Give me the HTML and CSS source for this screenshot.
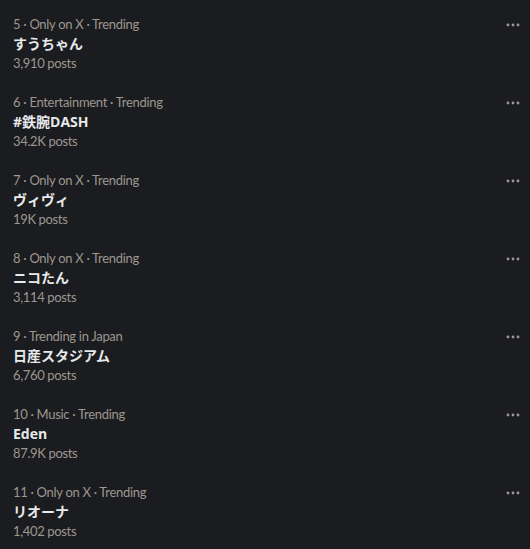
FILE: index.html
```html
<!DOCTYPE html>
<html>
<head>
<meta charset="utf-8">
<link rel="stylesheet" href="styles.css">
</head>
<body>
<div class="list">
  <div class="trend">
    <div class="text">
      <div class="meta">5 · Only on X · Trending</div>
      <div class="title">すうちゃん</div>
      <div class="count">3,910 posts</div>
    </div>
    <svg class="more" viewBox="0 0 14 4"><circle cx="2" cy="2" r="1.4"/><circle cx="7" cy="2" r="1.4"/><circle cx="12" cy="2" r="1.4"/></svg>
  </div>
  <div class="trend">
    <div class="text">
      <div class="meta">6 · Entertainment · Trending</div>
      <div class="title">#鉄腕DASH</div>
      <div class="count">34.2K posts</div>
    </div>
    <svg class="more" viewBox="0 0 14 4"><circle cx="2" cy="2" r="1.4"/><circle cx="7" cy="2" r="1.4"/><circle cx="12" cy="2" r="1.4"/></svg>
  </div>
  <div class="trend">
    <div class="text">
      <div class="meta">7 · Only on X · Trending</div>
      <div class="title">ヴィヴィ</div>
      <div class="count">19K posts</div>
    </div>
    <svg class="more" viewBox="0 0 14 4"><circle cx="2" cy="2" r="1.4"/><circle cx="7" cy="2" r="1.4"/><circle cx="12" cy="2" r="1.4"/></svg>
  </div>
  <div class="trend">
    <div class="text">
      <div class="meta">8 · Only on X · Trending</div>
      <div class="title">ニコたん</div>
      <div class="count">3,114 posts</div>
    </div>
    <svg class="more" viewBox="0 0 14 4"><circle cx="2" cy="2" r="1.4"/><circle cx="7" cy="2" r="1.4"/><circle cx="12" cy="2" r="1.4"/></svg>
  </div>
  <div class="trend">
    <div class="text">
      <div class="meta">9 · Trending in Japan</div>
      <div class="title">日産スタジアム</div>
      <div class="count">6,760 posts</div>
    </div>
    <svg class="more" viewBox="0 0 14 4"><circle cx="2" cy="2" r="1.4"/><circle cx="7" cy="2" r="1.4"/><circle cx="12" cy="2" r="1.4"/></svg>
  </div>
  <div class="trend">
    <div class="text">
      <div class="meta">10 · Music · Trending</div>
      <div class="title">Eden</div>
      <div class="count">87.9K posts</div>
    </div>
    <svg class="more" viewBox="0 0 14 4"><circle cx="2" cy="2" r="1.4"/><circle cx="7" cy="2" r="1.4"/><circle cx="12" cy="2" r="1.4"/></svg>
  </div>
  <div class="trend">
    <div class="text">
      <div class="meta">11 · Only on X · Trending</div>
      <div class="title">リオーナ</div>
      <div class="count">1,402 posts</div>
    </div>
    <svg class="more" viewBox="0 0 14 4"><circle cx="2" cy="2" r="1.4"/><circle cx="7" cy="2" r="1.4"/><circle cx="12" cy="2" r="1.4"/></svg>
  </div>
</div>
</body>
</html>
```
FILE: styles.css
```css
html, body {
  margin: 0;
  padding: 0;
  background: #1b1c1f;
}
body {
  font-family: "Open Sans", "Noto Sans CJK JP", sans-serif;
  color: #e7e9ea;
}
.list {
  display: flex;
  flex-direction: column;
}
.trend {
  height: 78px;
  box-sizing: border-box;
  padding: 15px 10px 5px 13px;
  display: flex;
  justify-content: space-between;
  align-items: flex-start;
}
.text {
  display: flex;
  flex-direction: column;
}
.meta {
  font-family: "Lato", "Noto Sans CJK JP", sans-serif;
  font-size: 13px;
  line-height: 19px;
  letter-spacing: -0.3px;
  color: #9d978f;
}
.title {
  font-size: 14px;
  font-weight: 700;
  line-height: 20px;
  color: #e7e9ea;
}
.count {
  font-family: "Lato", "Noto Sans CJK JP", sans-serif;
  font-size: 13px;
  line-height: 19px;
  letter-spacing: -0.35px;
  color: #9d978f;
}
.more {
  width: 14px;
  height: 4px;
  margin-top: 8px;
  fill: #9d978f;
}
```
